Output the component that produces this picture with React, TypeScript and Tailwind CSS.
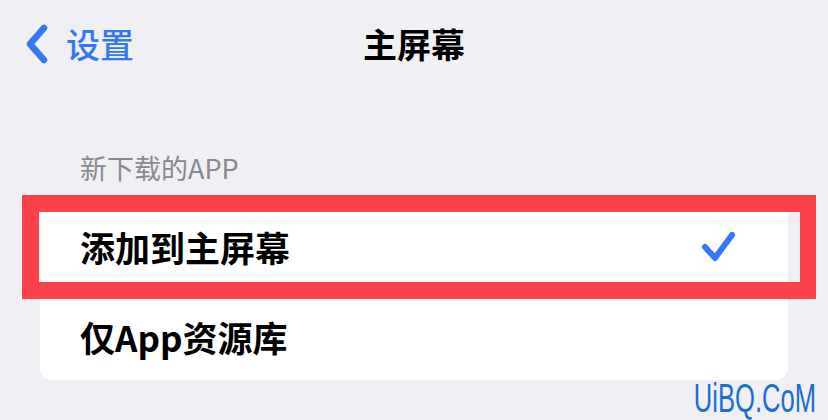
const cjk = "font-['Noto_Sans_CJK_SC','Noto_Sans',sans-serif]";

const BackChevron = () => (
  <svg width="26" height="42" viewBox="0 0 26 42" fill="none">
    <path d="M20 5 L6 21 L20 37" stroke="#3478f6" strokeWidth="6.5" strokeLinecap="round" strokeLinejoin="round" />
  </svg>
);

const CheckMark = () => (
  <svg width="36" height="32" viewBox="0 0 36 32" fill="none">
    <path d="M5 16 L15 27 L32 4" stroke="#3478f6" strokeWidth="6" strokeLinecap="round" strokeLinejoin="round" />
  </svg>
);

export default function App() {
  return (
    <div className={`relative w-[828px] h-[420px] overflow-hidden bg-[#efeff4] ${cjk}`}>
      {/* nav bar */}
      <div className="grid h-[88px] grid-cols-[1fr_auto_1fr] items-center">
        <div className="flex items-center gap-[16px] pl-[24px]">
          <BackChevron />
          <span className="text-[34px] font-medium leading-none text-[#3478f6]">设置</span>
        </div>
        <h1 className="text-[34px] font-bold leading-none text-black">主屏幕</h1>
        <div />
      </div>

      {/* section */}
      <div className="mt-[65px] pl-[80px] text-[27px] leading-[30px] text-[#8a8a8e]">新下载的APP</div>

      <div className="relative mx-[40px] mt-[19px] rounded-[12px] bg-white">
        <div className="flex h-[89px] items-center justify-between pl-[40px] pr-[52px]">
          <span className="text-[35px] font-bold leading-none text-black">添加到主屏幕</span>
          <CheckMark />
        </div>
        <div className="ml-[40px] h-px bg-[#d8d8dc]" />
        <div className="flex h-[88px] items-center pl-[40px]">
          <span className="text-[35px] font-bold leading-none text-black">仅App资源库</span>
        </div>

        {/* annotation box */}
        <div className="absolute left-[-18px] top-[-7px] h-[104px] w-[794px] border-[17px] border-r-[16px] border-[#fd414b]" />
      </div>

      {/* watermark */}
      <div className="absolute bottom-[2px] right-[12px] origin-right scale-x-[0.64] font-['Liberation_Sans',sans-serif] text-[40px] leading-none text-[#1a6fd0]">
        UiBQ.CoM
      </div>
    </div>
  );
}
